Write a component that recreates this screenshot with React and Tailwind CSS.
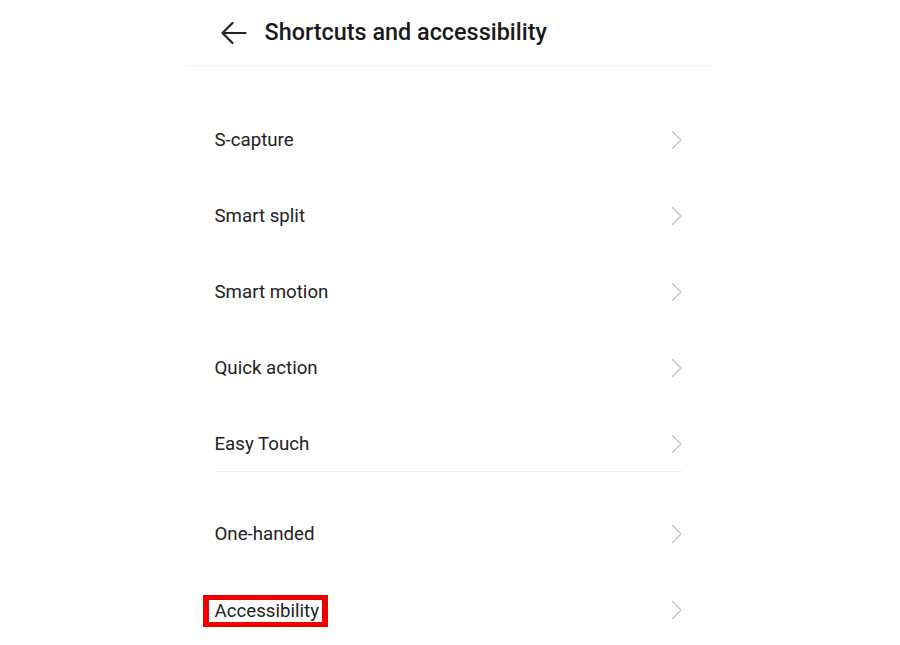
import React from "react";

function Chevron() {
  return (
    <svg width="12" height="20" viewBox="0 0 12 20" fill="none" className="shrink-0">
      <path d="M1.5 1.5 L10 10 L1.5 18.5" stroke="#c9c9c9" strokeWidth="1.6" strokeLinecap="round" strokeLinejoin="round" />
    </svg>
  );
}

function Row({ label, highlight, className = "" }) {
  return (
    <div className={"flex items-center justify-between pl-[30px] pr-[29px] " + className}>
      {highlight ? (
        <span className="-ml-[12px] mt-[2px] border-x-[6px] border-y-[5px] border-[#ee0000] pl-[6px] pr-[3px] text-[18.7px] leading-[22px] text-[#222]">
          {label}
        </span>
      ) : (
        <span className="text-[18.7px] leading-[24px] text-[#222]">{label}</span>
      )}
      <Chevron />
    </div>
  );
}

export default function App() {
  return (
    <div className="min-h-[645px] w-full bg-white" style={{ fontFamily: "Roboto, 'Noto Sans', sans-serif" }}>
      <div className="mx-auto w-[527px] translate-x-[-2px]">
        <div className="flex h-[66px] items-center gap-[18px] border-b border-[#f2f2f2] pl-[35px]">
          <svg width="27" height="24" viewBox="0 0 27 24" fill="none">
            <path d="M25.5 12 H2.5 M12.5 2 L2.5 12 L12.5 22" stroke="#222" strokeWidth="2.2" strokeLinecap="round" strokeLinejoin="round" />
          </svg>
          <span className="text-[23.4px] font-medium text-[#1a1a1a]">Shortcuts and accessibility</span>
        </div>
        <div className="pt-[36px]">
          <Row label="S-capture" className="h-[76px]" />
          <Row label="Smart split" className="h-[76px]" />
          <Row label="Smart motion" className="h-[76px]" />
          <Row label="Quick action" className="h-[76px]" />
          <Row label="Easy Touch" className="h-[76px]" />
          <div className="mx-[30px] -mt-[11px] h-px bg-[#efefef]" />
          <div className="pt-[24px]">
            <Row label="One-handed" className="h-[76px]" />
            <Row label="Accessibility" highlight className="h-[76px]" />
          </div>
        </div>
      </div>
    </div>
  );
}
